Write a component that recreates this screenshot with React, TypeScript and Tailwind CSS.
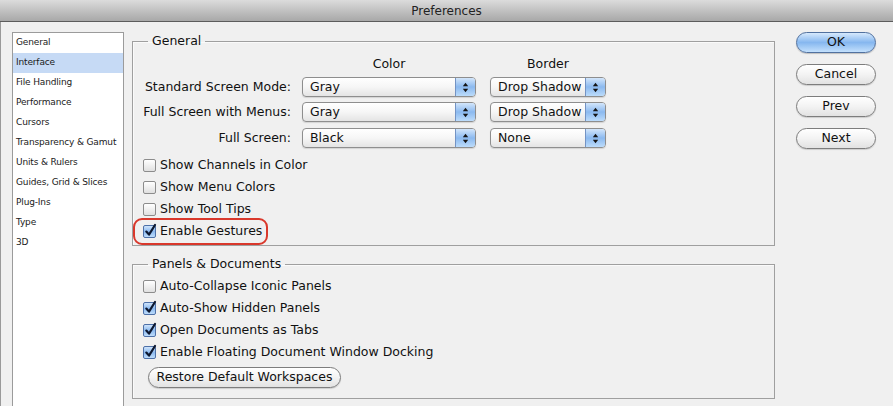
import React from "react";

const Arrows = () => (
  <svg width="7" height="11" viewBox="0 0 7 11">
    <path d="M3.5 0.8 L6.2 4.2 L0.8 4.2 Z" fill="#151515" />
    <path d="M0.8 6.8 L6.2 6.8 L3.5 10.2 Z" fill="#151515" />
  </svg>
);

function Popup({ value, w }: { value: string; w: string }) {
  return (
    <div
      className={`flex h-[20px] ${w} overflow-hidden rounded-[4px] border border-[#8e8e8e] bg-linear-to-b from-white via-[#f6f6f6] to-[#e4e4e4] shadow-[0_1px_1px_rgba(0,0,0,0.12)]`}
    >
      <div className="flex-1 pl-[7px] text-[12.5px] leading-[18px] text-[#111]">{value}</div>
      <div className="flex w-[20px] items-center justify-center border-l border-[#7393c4] bg-linear-to-b from-[#d3e6fb] via-[#8bb9ef] to-[#bcdcfb]">
        <Arrows />
      </div>
    </div>
  );
}

function Check({ checked }: { checked?: boolean }) {
  if (checked) {
    return (
      <div className="relative h-[13px] w-[13px] shrink-0 rounded-[2px] border border-[#4d70a8] bg-linear-to-b from-[#cfe4fb] via-[#8cbaf0] to-[#bddcfb]">
        <svg className="absolute left-[0px] top-[-3px]" width="13" height="15" viewBox="0 0 13 15">
          <path
            d="M2.3 8.6 L5 11.6 L11 2"
            stroke="#0d1830"
            strokeWidth="2.2"
            fill="none"
            strokeLinecap="round"
            strokeLinejoin="round"
          />
        </svg>
      </div>
    );
  }
  return (
    <div className="h-[13px] w-[13px] shrink-0 rounded-[2px] border border-[#8c8c8c] bg-linear-to-b from-white to-[#e0e0e0]" />
  );
}

function CheckRow({ label, checked, highlight }: { label: string; checked?: boolean; highlight?: boolean }) {
  return (
    <div className="relative flex h-[22px] items-center gap-[4px]">
      <Check checked={checked} />
      <span className="text-[12.5px] leading-[16px] text-[#111]">{label}</span>
      {highlight && (
        <div className="absolute left-[-10px] top-[-2px] h-[27px] w-[135px] rounded-[9px] border-2 border-[#d9382c]" />
      )}
    </div>
  );
}

function AquaButton({ label, primary }: { label: string; primary?: boolean }) {
  return (
    <div
      className={
        primary
          ? "flex h-[21px] w-[80px] items-center justify-center rounded-full border border-[#51719f] bg-linear-to-b from-[#d6e9fc] via-[#86b7ef] to-[#c3e0fc] text-[12.5px] text-[#111] shadow-[0_1px_1px_rgba(0,0,0,0.2)]"
          : "flex h-[21px] w-[80px] items-center justify-center rounded-full border border-[#7d7d7d] bg-linear-to-b from-white via-[#f3f3f3] to-[#e2e2e2] text-[12.5px] text-[#111] shadow-[0_1px_1px_rgba(0,0,0,0.15)]"
      }
    >
      {label}
    </div>
  );
}

const sidebarItems = [
  "General",
  "Interface",
  "File Handling",
  "Performance",
  "Cursors",
  "Transparency & Gamut",
  "Units & Rulers",
  "Guides, Grid & Slices",
  "Plug-Ins",
  "Type",
  "3D",
];

export default function App() {
  return (
    <div className="h-[406px] w-[893px] overflow-hidden bg-[#f0f0f0] font-['DejaVu_Sans','Noto_Sans',sans-serif] text-[#111]">
      {/* Title bar */}
      <div className="flex h-[22px] items-center justify-center border-b border-[#5c5c5c] bg-linear-to-b from-[#dcdcdc] to-[#a8a8a8]">
        <span className="text-[12px] leading-[14px] text-[#222]">Preferences</span>
      </div>

      <div className="flex h-[384px] border-l border-[#9a9a9a]">
        {/* Sidebar */}
        <div className="ml-[11px] mt-[10px] h-[400px] w-[112px] shrink-0 border border-[#9b9b9b] bg-white">
          {sidebarItems.map((it) => (
            <div
              key={it}
              className={`flex h-[20px] items-center pl-[3px] text-[9px] tracking-[-0.15px] text-[#1a1a1a] ${
                it === "Interface" ? "bg-[#c6daf5]" : ""
              }`}
            >
              {it}
            </div>
          ))}
        </div>

        {/* Main */}
        <div className="ml-[8px] mt-[11px] flex w-[643px] shrink-0 flex-col">
          <fieldset className="border border-[#9f9f9f] pb-[3px] shadow-[inset_1px_1px_0_#fafafa]">
            <legend className="ml-[15px] px-[4px] text-[12.5px] leading-[16px]">General</legend>
            <div className="mt-[7px] flex h-[16px] items-center text-[12.5px] leading-[16px]">
              <div className="w-[158px]" />
              <div className="ml-[11px] w-[174px] text-center">Color</div>
              <div className="ml-[14px] w-[116px] text-center">Border</div>
            </div>
            {[
              ["Standard Screen Mode:", "Gray", "Drop Shadow", "mt-[5px]"],
              ["Full Screen with Menus:", "Gray", "Drop Shadow", "mt-[5px]"],
              ["Full Screen:", "Black", "None", "mt-[6px]"],
            ].map(([label, c, b, mt]) => (
              <div key={label} className={`flex h-[20px] items-center ${mt}`}>
                <div className="w-[158px] text-right text-[12.5px] leading-[16px]">{label}</div>
                <div className="ml-[11px]">
                  <Popup value={c} w="w-[174px]" />
                </div>
                <div className="ml-[14px]">
                  <Popup value={b} w="w-[116px]" />
                </div>
              </div>
            ))}
            <div className="mt-[6px] pl-[10px]">
              <CheckRow label="Show Channels in Color" />
              <CheckRow label="Show Menu Colors" />
              <CheckRow label="Show Tool Tips" />
              <CheckRow label="Enable Gestures" checked highlight />
            </div>
          </fieldset>

          <fieldset className="mt-[10px] border border-[#9f9f9f] pb-[10px] shadow-[inset_1px_1px_0_#fafafa]">
            <legend className="ml-[15px] px-[4px] text-[12.5px] leading-[16px]">Panels &amp; Documents</legend>
            <div className="mt-[3px] pl-[10px]">
              <CheckRow label="Auto-Collapse Iconic Panels" />
              <CheckRow label="Auto-Show Hidden Panels" checked />
              <CheckRow label="Open Documents as Tabs" checked />
              <CheckRow label="Enable Floating Document Window Docking" checked />
              <div className="mt-[4px] ml-[5px] flex h-[21px] w-[193px] items-center justify-center rounded-full border border-[#7d7d7d] bg-linear-to-b from-white via-[#f3f3f3] to-[#e2e2e2] text-[12.5px] shadow-[0_1px_1px_rgba(0,0,0,0.15)]">
                Restore Default Workspaces
              </div>
            </div>
          </fieldset>
        </div>

        {/* Buttons */}
        <div className="ml-[21px] mt-[10px] flex flex-col gap-[11px]">
          <AquaButton label="OK" primary />
          <AquaButton label="Cancel" />
          <AquaButton label="Prev" />
          <AquaButton label="Next" />
        </div>
      </div>
    </div>
  );
}
